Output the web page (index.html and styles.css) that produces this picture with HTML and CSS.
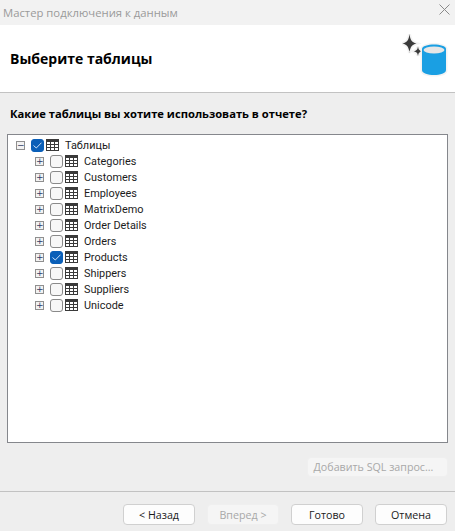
FILE: index.html
```html
<!DOCTYPE html>
<html lang="ru">
  <head>
    <meta charset="UTF-8" />
    <title>Мастер подключения к данным</title>
    <link rel="stylesheet" href="styles.css">
  </head>
  <body>
    <svg width="0" height="0" class="defs">
      <defs>
        <symbol id="grid" viewBox="0 0 13 12">
          <path d="M0 0H13V12H0Z" fill="#3a3a3a"/>
          <path d="M1 3H4V5H1ZM5 3H8V5H5ZM9 3H12V5H9ZM1 6H4V8H1ZM5 6H8V8H5ZM9 6H12V8H9ZM1 9H4V11H1ZM5 9H8V11H5ZM9 9H12V11H9Z" fill="#fff"/>
        </symbol>
      </defs>
    </svg>

    <div class="titlebar">
      <span class="title">Мастер подключения к данным</span>
      <svg class="close" width="11" height="11" viewBox="0 0 11 11">
        <path d="M0.5 0.5L10.5 10.5M10.5 0.5L0.5 10.5" stroke="#8a8a8a" fill="none"/>
      </svg>
    </div>

    <div class="header">
      <h1>Выберите таблицы</h1>
      <svg class="logo" width="46" height="46" viewBox="0 0 46 46">
        <path class="halo" d="M7.500 0C8.300 6 9.500 8 14.500 9.500C9.500 11 8.300 13 7.500 19C6.700 13 5.500 11 0.500 9.500C5.500 8 6.700 6 7.500 0Z" fill="#3a3a3a"/>
        <path class="halo" d="M16 12.500C16.500 15.500 17.300 16.500 20.300 17.300C17.300 18.100 16.500 19 16 22C15.500 19 14.700 18.100 11.700 17.300C14.700 16.500 15.500 15.500 16 12.500Z" fill="#3a3a3a"/>
        <path class="halo" d="M20 15C20 12 26 10.500 32 10.500C38 10.500 44 12 44 15V36C44 39.500 38 41 32 41C26 41 20 39.500 20 36Z" fill="#1a9fe3"/>
        <ellipse cx="32" cy="16" rx="10.500" ry="3.500" fill="#e6e6e6"/>
      </svg>
    </div>

    <div class="content">
      <p class="question">Какие таблицы вы хотите использовать в отчете?</p>

      <div class="tree">
        <div class="row">
          <span class="expander">−</span>
          <span class="check checked">
            <svg width="9" height="7" viewBox="0 0 9 7"><path d="M0.500 3.500L3.300 6L8.500 0.700" stroke="#cfe2f7" fill="none"/></svg>
          </span>
          <svg class="grid" width="13" height="12"><use href="#grid"/></svg>
          <span class="label">Таблицы</span>
        </div>
        <div class="children">
          <div class="row"><span class="expander">+</span><span class="check"></span><svg class="grid" width="13" height="12"><use href="#grid"/></svg><span class="label">Categories</span></div>
          <div class="row"><span class="expander">+</span><span class="check"></span><svg class="grid" width="13" height="12"><use href="#grid"/></svg><span class="label">Customers</span></div>
          <div class="row"><span class="expander">+</span><span class="check"></span><svg class="grid" width="13" height="12"><use href="#grid"/></svg><span class="label">Employees</span></div>
          <div class="row"><span class="expander">+</span><span class="check"></span><svg class="grid" width="13" height="12"><use href="#grid"/></svg><span class="label">MatrixDemo</span></div>
          <div class="row"><span class="expander">+</span><span class="check"></span><svg class="grid" width="13" height="12"><use href="#grid"/></svg><span class="label">Order Details</span></div>
          <div class="row"><span class="expander">+</span><span class="check"></span><svg class="grid" width="13" height="12"><use href="#grid"/></svg><span class="label">Orders</span></div>
          <div class="row">
            <span class="expander">+</span>
            <span class="check checked">
              <svg width="9" height="7" viewBox="0 0 9 7"><path d="M0.500 3.500L3.300 6L8.500 0.700" stroke="#cfe2f7" fill="none"/></svg>
            </span>
            <svg class="grid" width="13" height="12"><use href="#grid"/></svg>
            <span class="label">Products</span>
          </div>
          <div class="row"><span class="expander">+</span><span class="check"></span><svg class="grid" width="13" height="12"><use href="#grid"/></svg><span class="label">Shippers</span></div>
          <div class="row"><span class="expander">+</span><span class="check"></span><svg class="grid" width="13" height="12"><use href="#grid"/></svg><span class="label">Suppliers</span></div>
          <div class="row"><span class="expander">+</span><span class="check"></span><svg class="grid" width="13" height="12"><use href="#grid"/></svg><span class="label">Unicode</span></div>
        </div>
      </div>

      <div class="sql-row">
        <button class="btn sql" disabled>Добавить SQL запрос...</button>
      </div>
    </div>

    <div class="footer">
      <button class="btn">&lt; Назад</button>
      <button class="btn" disabled>Вперед &gt;</button>
      <button class="btn">Готово</button>
      <button class="btn">Отмена</button>
    </div>
  </body>
</html>
```

FILE: styles.css
```css
* {
  box-sizing: border-box;
}
body {
  margin: 0;
  width: 455px;
  height: 531px;
  overflow: hidden;
  background: #eeeeee;
  color: #000;
  font-family: "Open Sans", "Noto Sans", sans-serif;
  font-size: 10.7px;
  display: flex;
  flex-direction: column;
}
.defs {
  position: absolute;
}
.titlebar {
  height: 25px;
  flex: none;
  display: flex;
  align-items: center;
  justify-content: space-between;
  padding: 0 5px 0 3px;
  background: #f2f2f2;
}
.title {
  color: #9a9a9a;
  font-size: 11.3px;
}
.close {
  margin-bottom: 7px;
}
.header {
  height: 68px;
  flex: none;
  display: flex;
  align-items: flex-start;
  justify-content: space-between;
  background: #fff;
  border-bottom: 1px solid #c2c2c2;
  padding: 9px 7px 0 10px;
}
h1 {
  margin: 15px 0 0;
  font-size: 14px;
  line-height: 20px;
  font-weight: 700;
}
.halo {
  stroke: #f3f3f3;
  stroke-width: 3px;
  paint-order: stroke;
}
.content {
  flex: 1;
  padding: 0 7px;
  display: flex;
  flex-direction: column;
}
.question {
  margin: 13px 0 0 3px;
  font-size: 11.2px;
  line-height: 16px;
  font-weight: 700;
}
.tree {
  margin-top: 12px;
  height: 309px;
  background: #fff;
  border: 1px solid #85878c;
  padding: 2px 0 0 8px;
}
.row {
  height: 16px;
  display: flex;
  align-items: center;
  white-space: nowrap;
  color: #1c1c1c;
}
.label {
  font-family: "Roboto", "Open Sans", sans-serif;
  font-size: 10.9px;
  line-height: 14px;
  margin-top: 1px;
}
.children {
  padding-left: 19px;
}
.expander {
  width: 9px;
  height: 9px;
  flex: none;
  margin-right: 6px;
  border: 1px solid #8f8f8f;
  background: #f2f2f2;
  color: #333c66;
  font-size: 9px;
  font-family: "DejaVu Sans", sans-serif;
  line-height: 7px;
  text-align: center;
}
.check {
  width: 13px;
  height: 13px;
  flex: none;
  margin-right: 2px;
  border: 1px solid #8a8a8a;
  border-radius: 3px;
  background: #f7f7f7;
  display: flex;
  align-items: center;
  justify-content: center;
}
.check.checked {
  background: #0a5fb8;
  border-color: #0a5fb8;
}
.grid {
  flex: none;
  margin-right: 6px;
}
.sql-row {
  margin-top: 14px;
  display: flex;
  justify-content: flex-end;
}
.btn {
  width: 72px;
  height: 21px;
  padding: 0;
  background: #fdfdfd;
  border: 1px solid #d0d0d0;
  border-radius: 4px;
  color: #1a1a1a;
  font: inherit;
}
.btn:disabled {
  background: #f5f5f5;
  border-color: #efefef;
  color: #a8a8a8;
}
.btn.sql {
  width: 141px;
  height: 20px;
  padding-right: 8px;
}
.footer {
  height: 40px;
  flex: none;
  border-top: 1px solid #c2c2c2;
  display: flex;
  justify-content: flex-end;
  gap: 12px;
  padding: 12px 8px 0 0;
}
```
